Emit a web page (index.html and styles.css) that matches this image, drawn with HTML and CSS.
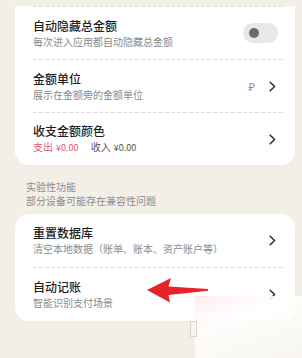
FILE: index.html
```html
<!DOCTYPE html>
<html lang="zh-CN">
<head>
    <meta charset="UTF-8">
    <meta name="viewport" content="width=device-width, initial-scale=1.0">
    <title>设置</title>
    <link rel="stylesheet" href="styles.css">
</head>
<body>

    <div class="page">
        <div class="card card-first">
            <div class="divider"></div>
            <div class="row">
                <div class="text">
                    <div class="title">自动隐藏总金额</div>
                    <div class="sub">每次进入应用都自动隐藏总金额</div>
                </div>
                <span class="switch"><span class="knob"></span></span>
            </div>
            <div class="divider"></div>
            <div class="row">
                <div class="text">
                    <div class="title">金额单位</div>
                    <div class="sub">展示在金额旁的金额单位</div>
                </div>
                <div class="extra">
                    <span class="unit">₽</span>
                    <svg class="chevron" viewBox="0 0 7 11"><polyline points="1.2,1.2 5.6,5.5 1.2,9.8"/></svg>
                </div>
            </div>
            <div class="divider"></div>
            <div class="row">
                <div class="text">
                    <div class="title">收支金额颜色</div>
                    <div class="sub money">
                        <span class="out">支出</span><span class="out num">¥0.00</span>
                        <span class="in">收入</span><span class="in num">¥0.00</span>
                    </div>
                </div>
                <svg class="chevron" viewBox="0 0 7 11"><polyline points="1.2,1.2 5.6,5.5 1.2,9.8"/></svg>
            </div>
        </div>

        <div class="section">
            <div>实验性功能</div>
            <div>部分设备可能存在兼容性问题</div>
        </div>

        <div class="card">
            <div class="row">
                <div class="text">
                    <div class="title">重置数据库</div>
                    <div class="sub">清空本地数据（账单、账本、资产账户等）</div>
                </div>
                <svg class="chevron" viewBox="0 0 7 11"><polyline points="1.2,1.2 5.6,5.5 1.2,9.8"/></svg>
            </div>
            <div class="divider"></div>
            <div class="row">
                <div class="text">
                    <div class="title">自动记账</div>
                    <div class="sub">智能识别支付场景</div>
                </div>
                <svg class="chevron" viewBox="0 0 7 11"><polyline points="1.2,1.2 5.6,5.5 1.2,9.8"/></svg>
            </div>
        </div>
    </div>

    <!-- annotation arrow drawn over the screenshot -->
    <svg class="arrow" viewBox="0 0 66 30">
        <path d="M2 14 L26 2 L23.5 10.5 Q44 11.5 63 13 L63 14.8 Q44 17 23.5 19 L25 26.5 Z"/>
    </svg>
    <div class="veil"></div>
    <div class="tag"></div>

</body>
</html>
```

FILE: styles.css
```css
body {
    margin: 0;
    background: #f3efe6;
    font-family: "Noto Sans CJK SC", "Noto Sans", sans-serif;
    color: #222;
    width: 302px;
    height: 358px;
    overflow: hidden;
    position: relative;
}
.page {
    padding: 6px 7px 0 15px;
}
.card {
    background: #fff;
    border-radius: 14px;
}
.card-first {
    border-radius: 0 0 14px 14px;
}
.row {
    height: 52px;
    display: flex;
    align-items: center;
    justify-content: space-between;
    padding: 0 17px 0 18px;
}
.card + .section + .card .row {
    height: 53px;
}
.divider {
    height: 1px;
    margin: 0 12px 0 18px;
    background: repeating-linear-gradient(to right, #dedede 0 4px, transparent 4px 6px);
}
.title {
    font-size: 12px;
    line-height: 16px;
    font-weight: 500;
    color: #1f1f1f;
}
.sub {
    font-size: 10px;
    line-height: 14px;
    margin-top: 1px;
    color: #8a8a8a;
}
.money span {
    margin-right: 3px;
}
.money .num {
    font-size: 9px;
    margin-right: 10px;
}
.out {
    color: #de5a78;
}
.in {
    color: #555;
}
.switch {
    width: 35px;
    height: 20px;
    border-radius: 10px;
    background: #e8e8e8;
    display: flex;
    align-items: center;
    padding-left: 6px;
    box-sizing: border-box;
}
.knob {
    width: 10px;
    height: 10px;
    border-radius: 50%;
    background: #6a6a6a;
}
.extra {
    display: flex;
    align-items: center;
    gap: 14px;
}
.unit {
    font-size: 11px;
    color: #8a8a8a;
}
.chevron {
    width: 7px;
    height: 11px;
    margin-right: 2px;
}
.chevron polyline {
    fill: none;
    stroke: #333;
    stroke-width: 1.6;
    stroke-linecap: round;
    stroke-linejoin: round;
}
.section {
    padding: 15px 0 6px 11px;
    font-size: 10px;
    line-height: 14px;
    color: #8c8c8c;
}
.arrow {
    position: absolute;
    left: 145px;
    top: 276px;
    width: 66px;
    height: 30px;
}
.arrow path {
    fill: #e4232b;
}
.veil {
    position: absolute;
    left: 195px;
    top: 296px;
    right: 0;
    bottom: 0;
    background: linear-gradient(160deg, rgba(255, 236, 238, 0.95), rgba(255, 255, 255, 0.85) 35%, rgba(250, 248, 243, 0.7));
}
.tag {
    position: absolute;
    left: 190px;
    top: 321px;
    width: 5px;
    height: 14px;
    border: 1px solid #d8d4cc;
    background: #f8f6f1;
}
```
